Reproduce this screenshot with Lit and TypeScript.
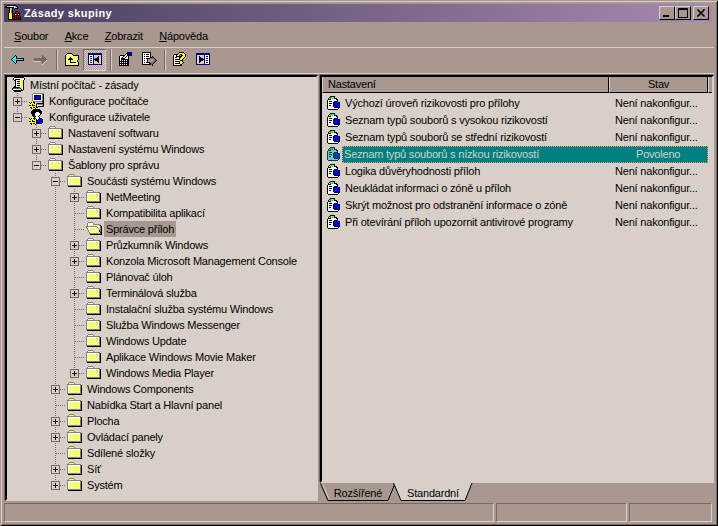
import { LitElement, html, css, svg } from "lit";
import { customElement } from "lit/decorators.js";

const PAL: Record<string, string> = {
  k: "#000000", w: "#ffffff", y: "#ffff00", g: "#808080", D: "#786860", c: "#d8d0c8", f: "#a89890",
  b: "#0000ff", n: "#000080", t: "#008080", a: "#00ffff", e: "#00c000", r: "#c00000", m: "#808000", s: "#c0c0c0",
};

function px(rows: string[], tint = false, phase = 0) {
  const rects = [];
  rows.forEach((row, y) => {
    [...row].forEach((ch, x) => {
      if (ch === ".") return;
      const c = ch === "d" ? ((x + y + phase) % 2 ? "#ffffff" : "#ffff00") : PAL[ch];
      rects.push(svg`<rect x=${x} y=${y} width="1" height="1" fill=${c}></rect>`);
      if (tint) rects.push(svg`<rect x=${x} y=${y} width="1" height="1" fill="#008080" opacity="0.5"></rect>`);
    });
  });
  return html`<svg class="px" width="16" height="16" viewBox="0 0 16 16" shape-rendering="crispEdges">${rects}</svg>`;
}

const FOLDER = [
  "................",
  "..ggggg.........",
  ".gdwdwdg........",
  "gggggggggggggg..",
  "gwwwwwwwwwwwwgk.",
  "gwdddddddddddgk.",
  "gwdddddddddddgk.",
  "gwdddddddddddgk.",
  "gwdddddddddddgk.",
  "gwdddddddddddgk.",
  "gwdddddddddddgk.",
  "gwdddddddddddgk.",
  "ggggggggggggggk.",
  ".kkkkkkkkkkkkkk.",
  "................",
  "................",
];
const FOLDER_OPEN = [
  "................",
  "..ggggg.........",
  ".gwwwwwg........",
  ".gwwwwwggggggg..",
  ".gwddddddddddgk.",
  "gggggggggggdddgk",
  "gwwwwwwwwwwgddgk",
  ".gdddddddddwgdgk",
  ".gddddddddddwggk",
  "..gddddddddddkgk",
  "..gddddddddddkgk",
  "...gddddddddddkk",
  "...ggggggggggggk",
  "....kkkkkkkkkkkk",
  "................",
  "................",
];
const POLICY = [
  "....kkkkk.......",
  "...keayak.......",
  "..kyeaewkkk.....",
  "..kkkwwwwwkk....",
  ".kwwwwwwwwwk....",
  ".kwkkkwwkkkk....",
  ".kwwwwwkbbbbbk..",
  ".kwkkkwkbbbbbk..",
  ".kwwwwwkbbbbbk..",
  ".kwkkwwkbbbbbk..",
  ".kwwwwwkbbbbbk..",
  ".kwwwwwwkkkkkk..",
  ".kwwwwwwwwwwk...",
  "..kkkkkkkkkk....",
  "................",
  "................",
];
const ROOT = [
  "...kkkkkkkkkk...",
  "..kwwwwwwwywwk..",
  "..kwkkkkkwyywk..",
  "...kkwwwwwyyk...",
  "....kwkkkwyyk...",
  "....kwwwwwyyk...",
  "....kwkkkwyyk...",
  "....kwwwwwyyk...",
  "....kwkkkwyyk...",
  "...kkwwwwyywk...",
  "..kkkkkkkyywk...",
  ".ktttttttkyyk...",
  ".kwwwwwwwwkyk...",
  "..kkkkkkkkkk....",
  "...kkkkkkk......",
  "................",
];
const COMPUTER = [
  "....ggggggggggg.",
  "...gwwwwwwwwwgk.",
  "...gwkkkkkkkwgk.",
  "...gwkbbbbbkwgk.",
  "...gwkbbbbbkwgk.",
  "...gwkbbbbbkwgk.",
  "...gwkkkkkkkwgk.",
  "...gwwwwwwwwwgk.",
  ".y.ygggggggggkk.",
  "kykykkcccccccgk.",
  ".kyyykygkkkkkkk.",
  "yyykyyyk.gggggk.",
  "kkykkkykywwwwgk.",
  ".yyyyyyk.kkkkkk.",
  "ykkykkykk.......",
  "..k.y.k.........",
];
const USER = [
  "....kkkkkkk.....",
  "...kkkkkkkkk....",
  "..kkkkkkkkkkk...",
  "..kkkkkwwwkkk...",
  "..kkkkwwwwwkk...",
  "...kkkwwwwwk....",
  "...kkkwwwwk.....",
  "....kkkwwk......",
  ".y.y.kwwwwk.....",
  "kykykkkwwwbbk...",
  ".kyyykykwbbbbk..",
  "yyykyyykbbbbbk..",
  "kkykkkykbbbbbk..",
  ".yyyyyykbbbbbk..",
  "ykkykkykkkkkk...",
  "..k.y.k.........",
];
const BACK = [
  "................",
  "................",
  "................",
  "......k.........",
  ".....kak........",
  "....kaak........",
  "...kaaakkkkkkkk.",
  "..kaaaaaaaaaaak.",
  "...kaaakkkkkkkk.",
  "....kaak........",
  ".....kak........",
  "......k.........",
  "................",
  "................",
  "................",
  "................",
];
const FWD = [
  "................",
  "................",
  "................",
  ".........D......",
  ".........DD.....",
  ".........DDD....",
  ".DDDDDDDDDDDD...",
  ".DDDDDDDDDDDDD..",
  ".DDDDDDDDDDDDc..",
  ".cccccccDDDDc...",
  ".........DDc....",
  ".........Dc.....",
  ".........c......",
  "................",
  "................",
  "................",
];
const UP = [
  "................",
  "...kkkkk........",
  "..kdddddk.......",
  ".kdddddddkkkkkk.",
  ".kddddddddddddk.",
  ".kddddkdddddddk.",
  ".kdddkkkddddddk.",
  ".kddkkkkkdddddk.",
  ".kddddkddddddk..",
  ".kddddkddddddk..",
  ".kddddkkkkkkddk.",
  ".kddddddddddddk.",
  ".kddddddddddddk.",
  ".kkkkkkkkkkkkkk.",
  "................",
  "................",
];
const TREEVIEW = [
  "................",
  ".nnnnnnnnnnnnnn.",
  ".nnnnnnnnnnnnnn.",
  ".nwwwwncccccccn.",
  ".nwnnwncccckccn.",
  ".nwwwwnccckkccn.",
  ".nwnnwnckkkkccn.",
  ".nwwwwnkkkkkccn.",
  ".nwnnwnckkkkccn.",
  ".nwwwwnccckkccn.",
  ".nwnnwncccckccn.",
  ".nwwwwncccccccn.",
  ".nnnnnnnnnnnnnn.",
  "................",
  "................",
  "................",
];
const PROPS = [
  ".........nnnnn..",
  "........knnnnn..",
  ".......kwknnnn..",
  "..kkkkkcwkknnn..",
  ".kwwwkcwkwk.....",
  ".kwwkcwkwwk.....",
  ".kwkkkkwwwk.....",
  ".kwkkkkkkkk.....",
  ".kwkwkwkwkk.....",
  ".kkkkkkkkkk.....",
  ".kwkwkwkwkk.....",
  ".kkkkkkkkkk.....",
  ".kwkwkwkwkk.....",
  ".kkkkkkkkkk.....",
  "................",
  "................",
];
const EXPORT = [
  ".kkkkkkkkk......",
  ".kwwwwwwwk......",
  ".kwnwkkkwk......",
  ".kwwwwwwwk......",
  ".kwnwkkkwk.k....",
  ".kwwwwwwwkkDk...",
  ".kwnwkkkkDDDDk..",
  ".kwwwwkfffffffk.",
  ".kwnwwkffffffDDk",
  ".kwwwwkfffffDDk.",
  ".kwnwkkkkfDDDk..",
  ".kwwwwwwkkDDk...",
  ".kkkkkkkkkDk....",
  "...........k....",
  "................",
  "................",
];
const HELP = [
  ".......kkkkk....",
  "......kyyyyyk...",
  "..kkkkyykkyyyk..",
  ".kwwkyyk.kkyyk..",
  ".kwwkkkkkkyyyk..",
  ".kwkkwwkkyyyk...",
  ".kwwwwwkyyyk....",
  ".kwkkkkkyyk.....",
  ".kwwwwwwkkk.....",
  ".kwkkkkkyyk.....",
  ".kwwwwwkyyyk....",
  ".kwkkkkkyyk.....",
  ".kwwwwwwkk......",
  ".kkkkkkkkk......",
  "................",
  "................",
];
const ACTION = [
  "................",
  ".nnnnnnnnnnnnnn.",
  ".nnnnnnnnnnnnnn.",
  ".ncccccccnwwwwn.",
  ".ncckccccnwnnwn.",
  ".ncckkcccnwwwwn.",
  ".ncckkkkcnwnnwn.",
  ".ncckkkkknwwwwn.",
  ".ncckkkkcnwnnwn.",
  ".ncckkcccnwwwwn.",
  ".ncckccccnwnnwn.",
  ".ncccccccnwwwwn.",
  ".nnnnnnnnnnnnnn.",
  "................",
  "................",
  "................",
];
const HAMMER = [
  "..kkkkkkkkk.....",
  ".kssswwwsssk....",
  "kkkkkkkkkwssk...",
  "....kssk..kkk...",
  "....kssk........",
  "....kwmk........",
  "....kwmk...kk...",
  "....kwmk..krrk..",
  "...kyyykk.krrkk.",
  "...kyyyk.kwrrwk.",
  "...kyyyk.krkrkk.",
  "...kyyykkkrkrkrk",
  "...kyyykrkrkrkrk",
  "...kyyykrkrkrkrk",
  "...kkkkkkkkkkkkk",
  "................",
];

type Row = { l: number; e?: string; t: string; i?: string; last?: boolean };
const ROWS: Row[] = [
  { l: 0, t: "Místní počítač - zásady", i: "root" },
  { l: 1, e: "+", t: "Konfigurace počítače", i: "comp" },
  { l: 1, e: "-", t: "Konfigurace uživatele", i: "user", last: true },
  { l: 2, e: "+", t: "Nastavení softwaru" },
  { l: 2, e: "+", t: "Nastavení systému Windows" },
  { l: 2, e: "-", t: "Šablony pro správu", last: true },
  { l: 3, e: "-", t: "Součásti systému Windows" },
  { l: 4, e: "+", t: "NetMeeting" },
  { l: 4, t: "Kompatibilita aplikací" },
  { l: 4, t: "Správce příloh", i: "open" },
  { l: 4, e: "+", t: "Průzkumník Windows" },
  { l: 4, e: "+", t: "Konzola Microsoft Management Console" },
  { l: 4, t: "Plánovač úloh" },
  { l: 4, e: "+", t: "Terminálová služba" },
  { l: 4, t: "Instalační služba systému Windows" },
  { l: 4, t: "Služba Windows Messenger" },
  { l: 4, t: "Windows Update" },
  { l: 4, t: "Aplikace Windows Movie Maker" },
  { l: 4, e: "+", t: "Windows Media Player", last: true },
  { l: 3, e: "+", t: "Windows Components" },
  { l: 3, t: "Nabídka Start a Hlavní panel" },
  { l: 3, e: "+", t: "Plocha" },
  { l: 3, e: "+", t: "Ovládací panely" },
  { l: 3, t: "Sdílené složky" },
  { l: 3, e: "+", t: "Síť" },
  { l: 3, e: "+", t: "Systém", last: true },
];

const SETTINGS = [
  ["Výchozí úroveň rizikovosti pro přílohy", "Není nakonfigur..."],
  ["Seznam typů souborů s vysokou rizikovostí", "Není nakonfigur..."],
  ["Seznam typů souborů se střední rizikovostí", "Není nakonfigur..."],
  ["Seznam typů souborů s nízkou rizikovostí", "Povoleno", "sel"],
  ["Logika důvěryhodnosti příloh", "Není nakonfigur..."],
  ["Neukládat informaci o zóně u příloh", "Není nakonfigur..."],
  ["Skrýt možnost pro odstranění informace o zóně", "Není nakonfigur..."],
  ["Při otevírání příloh upozornit antivirové programy", "Není nakonfigur..."],
];

const DOT = "#786860";

function connector(top: boolean, bottom: boolean, exp?: string) {
  return html`<svg class="cell" width="19" height="16" viewBox="0 0 19 16" shape-rendering="crispEdges">
    ${top ? svg`<path d="M9.5 0V8" stroke=${DOT} stroke-dasharray="1 1" fill="none"></path>` : ""}
    ${bottom ? svg`<path d="M9.5 8V16" stroke=${DOT} stroke-dasharray="1 1" fill="none"></path>` : ""}
    <path d="M10 8.5H19" stroke=${DOT} stroke-dasharray="1 1" fill="none"></path>
    ${exp
      ? svg`<rect x="5.5" y="4.5" width="8" height="8" fill="#d8d0c8" stroke="#786860"></rect>
        <path d="M7 8.5H12" stroke="#000"></path>
        ${exp === "+" ? svg`<path d="M9.5 6V11" stroke="#000"></path>` : ""}`
      : ""}
  </svg>`;
}

function vline() {
  return html`<svg class="cell" width="19" height="16" viewBox="0 0 19 16" shape-rendering="crispEdges">
    <path d="M9.5 0V16" stroke=${DOT} stroke-dasharray="1 1" fill="none"></path>
  </svg>`;
}

@customElement("app-root")
export class AppRoot extends LitElement {
  static styles = css`
    :host {
      display: block;
      width: 718px;
      height: 526px;
      box-sizing: border-box;
      padding: 4px;
      background: #a89890;
      box-shadow: inset 1px 1px 0 #a89890, inset -1px -1px 0 #000, inset 2px 2px 0 #d8d0c8, inset -2px -2px 0 #786860;
      font: 11px "Liberation Sans", Arial, sans-serif;
      letter-spacing: -0.2px;
      color: #000;
      overflow: hidden;
    }
    svg { display: block; flex: none; }
    .spacer { width: 19px; flex: none; }
    .title {
      height: 18px;
      width: 708px;
      display: flex;
      align-items: center;
      background: linear-gradient(to right, #484060, #a888b0);
      color: #fff;
      font-weight: bold;
      padding: 0 3px 0 1px;
      box-sizing: border-box;
    }
    .title .name { margin-left: 3px; flex: 1; font-size: 11px; letter-spacing: 0.4px; }
    .wb {
      width: 16px;
      height: 14px;
      box-sizing: border-box;
      background: #a89890;
      border: 1px solid;
      border-color: #d8d0c8 #000 #000 #d8d0c8;
      display: flex;
      align-items: center;
      justify-content: center;
    }
    .wb.m { margin-right: 2px; }
    .menu {
      height: 25px;
      box-sizing: border-box;
      margin-top: 1px;
      display: flex;
      align-items: center;
      gap: 16.4px;
      padding: 1px 0 0 10px;
      border-bottom: 1px solid #d8d0c8;
    }
    .menu u { text-decoration: underline; }
    .toolbar {
      height: 26px;
      box-sizing: border-box;
      display: flex;
      align-items: flex-start;
      padding: 1px 0 0 1px;
      border-bottom: 1px solid #d8d0c8;
    }
    .tb { width: 23px; height: 22px; display: flex; align-items: center; justify-content: center; box-sizing: border-box; flex: none; }
    .tb.fwd { margin-left: 1px; }
    .tb.on {
      border: 1px solid;
      border-color: #786860 #d8d0c8 #d8d0c8 #786860;
      background: repeating-conic-gradient(#d8d0c8 0 25%, #a89890 0 50%) 0 0 / 2px 2px;
    }
    .sep { width: 2px; height: 22px; flex: none; background: linear-gradient(to right, #786860 50%, #d8d0c8 50%); margin: 0 2px 0 4px; }
    .panes { display: flex; gap: 2px; margin-top: 1px; height: 426px; }
    .sunken {
      box-sizing: border-box;
      border: 2px solid;
      border-color: #000 #d8d0c8 #d8d0c8 #000;
      box-shadow: -1px -1px 0 #786860;
    }
    .tree {
      flex: none;
      background: #d8d0c8;
      margin-left: 1px;
      width: 313px;
      overflow: hidden;
    }
    .row { display: flex; align-items: center; height: 16px; padding-left: 1px; }
    .row .ic { margin-left: 2px; }
    .row.root .ic { margin-left: 3px; }
    .row .lbl { margin-left: 2px; padding: 0 2px; height: 16px; line-height: 16px; white-space: nowrap; }
    .row.root .lbl { margin-left: 1px; }
    .row .lbl.cur { background: #a89890; }
    .right { flex: 1; display: flex; flex-direction: column; min-width: 0; }
    .list { height: 408px; background: #d8d0c8; overflow: hidden; }
    .hdr { display: flex; height: 16px; background: #a89890; }
    .hc {
      box-sizing: border-box;
      height: 16px;
      line-height: 15px;
      border-style: solid;
      border-width: 0 1px 1px 1px;
      border-color: #d8d0c8 #000 #000 #d8d0c8;
      padding-left: 5px;
      flex: none;
    }
    .hc.a { width: 287px; }
    .hc.b { width: 99px; text-align: center; padding-left: 0; }
    .hc.c { width: 4px; padding-left: 0; border-right: 0; }
    .rows { padding-top: 2px; }
    .lrow { display: flex; align-items: center; height: 17px; padding-left: 4px; }
    .lrow .nm { flex: none; width: 271px; height: 17px; line-height: 17px; padding-left: 3px; box-sizing: border-box; white-space: nowrap; }
    .lrow .st { flex: none; width: 95px; height: 17px; line-height: 17px; padding-left: 2px; box-sizing: border-box; white-space: nowrap; }
    .lrow .tx { display: flex; width: 366px; flex: none; height: 17px; }
    .lrow.sel .tx { background: #008080; color: #d8d0c8; outline: 1px dotted #ff9060; outline-offset: -1px; }
    .lrow.sel .nm { padding-left: 2px; }
    .lrow.sel .st { padding-left: 23px; }
    .tabs { display: flex; height: 18px; }
    .tab { display: grid; flex: none; height: 18px; }
    .tab > * { grid-area: 1 / 1; }
    .tab span { justify-self: center; align-self: center; padding-top: 2px; }
    .tab.second { margin-left: -3px; }
    .status { display: flex; gap: 2px; height: 19px; margin-top: 2px; }
    .sp { box-sizing: border-box; border: 1px solid; border-color: #786860 #d8d0c8 #d8d0c8 #786860; height: 19px; flex: none; }
    .sp.a { width: 490px; }
    .sp.b { width: 131px; }
    .sp.c { width: 83px; }
  `;

  private tree() {
    const cont: boolean[] = [];
    return ROWS.map((r) => {
      const cells = [];
      for (let i = 1; i < r.l; i++) cells.push(cont[i] ? vline() : html`<div class="spacer"></div>`);
      if (r.l > 0) {
        cells.push(connector(true, !r.last, r.e));
        cont[r.l] = !r.last;
      }
      const map: Record<string, string[]> = { root: ROOT, comp: COMPUTER, user: USER, open: FOLDER_OPEN };
      return html`<div class="row ${r.l === 0 ? "root" : ""}">
        ${cells}
        <div class="ic">${px(map[r.i ?? ""] ?? FOLDER, false, (r.l + 1) % 2)}</div>
        <div class="lbl ${r.i === "open" ? "cur" : ""}">${r.t}</div>
      </div>`;
    });
  }

  render() {
    return html`
      <div class="title">
        ${px(HAMMER)}
        <div class="name">Zásady skupiny</div>
        <div class="wb"><svg width="10" height="10" shape-rendering="crispEdges"><rect x="1" y="7" width="6" height="2" fill="#000"></rect></svg></div>
        <div class="wb m"><svg width="10" height="10" shape-rendering="crispEdges"><rect x="0.5" y="0.5" width="9" height="9" fill="none" stroke="#000"></rect><rect x="0" y="0" width="10" height="2" fill="#000"></rect></svg></div>
        <div class="wb"><svg width="10" height="10" viewBox="0 0 10 10"><path d="M1.5 1.5L8.5 8.5M8.5 1.5L1.5 8.5" stroke="#000" stroke-width="1.6"></path></svg></div>
      </div>
      <div class="menu">
        <span><u>S</u>oubor</span><span><u>A</u>kce</span><span><u>Z</u>obrazit</span><span><u>N</u>ápověda</span>
      </div>
      <div class="toolbar">
        <div class="tb">${px(BACK)}</div>
        <div class="tb fwd">${px(FWD)}</div>
        <div class="sep"></div>
        <div class="tb">${px(UP)}</div>
        <div class="tb on">${px(TREEVIEW)}</div>
        <div class="sep"></div>
        <div class="tb">${px(PROPS)}</div>
        <div class="tb">${px(EXPORT)}</div>
        <div class="sep"></div>
        <div class="tb">${px(HELP)}</div>
        <div class="tb">${px(ACTION)}</div>
      </div>
      <div class="panes">
        <div class="tree sunken">${this.tree()}</div>
        <div class="right">
          <div class="list sunken">
            <div class="hdr">
              <div class="hc a">Nastavení</div>
              <div class="hc b">Stav</div>
              <div class="hc c"></div>
            </div>
            <div class="rows">
              ${SETTINGS.map(
                ([n, s, c]) => html`<div class="lrow ${c ?? ""}">
                  ${px(POLICY, c === "sel")}
                  <div class="tx"><div class="nm">${n}</div><div class="st">${s}</div></div>
                </div>`
              )}
            </div>
          </div>
          <div class="tabs">
            <div class="tab">
              <svg width="76" height="18" viewBox="0 0 76 18">
                <path d="M0.5 0.5L8 17.5H68L75 0.5" fill="#a89890" stroke="#000"></path>
                <path d="M2.5 1L9 16" stroke="#d8d0c8" fill="none"></path>
              </svg>
              <span>Rozšířené</span>
            </div>
            <div class="tab second">
              <svg width="80" height="18" viewBox="0 0 80 18">
                <path d="M0.5 0L8 17.5H72L79 0Z" fill="#d8d0c8"></path>
                <path d="M0.5 0L8 17.5H72L79 0" fill="none" stroke="#000"></path>
              </svg>
              <span>Standardní</span>
            </div>
          </div>
        </div>
      </div>
      <div class="status"><div class="sp a"></div><div class="sp b"></div><div class="sp c"></div></div>
    `;
  }
}
